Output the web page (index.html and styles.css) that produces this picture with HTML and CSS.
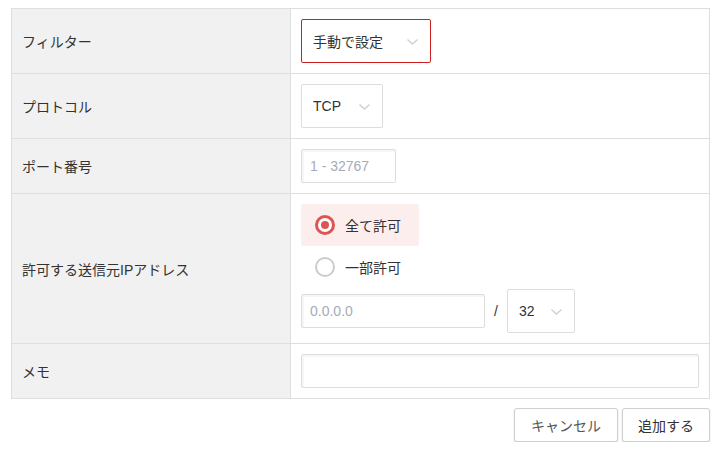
FILE: index.html
```html
<!DOCTYPE html>
<html lang="ja">
<head>
<meta charset="utf-8">
<link rel="stylesheet" href="styles.css">
</head>
<body>
<div class="wrap">
  <table class="form">
    <tr>
      <th>フィルター</th>
      <td>
        <div class="select select-filter active">
          <span>手動で設定</span>
          <svg class="chev" width="11" height="6" viewBox="0 0 11 6"><polyline points="0.5,0.5 5.5,5 10.5,0.5" fill="none" stroke="#d0d0d0" stroke-width="1.4"/></svg>
        </div>
      </td>
    </tr>
    <tr>
      <th>プロトコル</th>
      <td>
        <div class="select select-proto">
          <span>TCP</span>
          <svg class="chev" width="11" height="6" viewBox="0 0 11 6"><polyline points="0.5,0.5 5.5,5 10.5,0.5" fill="none" stroke="#d0d0d0" stroke-width="1.4"/></svg>
        </div>
      </td>
    </tr>
    <tr>
      <th>ポート番号</th>
      <td>
        <div class="input input-port placeholder">1 - 32767</div>
      </td>
    </tr>
    <tr>
      <th>許可する送信元IPアドレス</th>
      <td>
        <div class="radio checked"><span class="dot"></span><span>全て許可</span></div>
        <div class="radio"><span class="dot"></span><span>一部許可</span></div>
        <div class="ip-row">
          <div class="input input-ip placeholder">0.0.0.0</div>
          <span class="slash">/</span>
          <div class="select select-mask">
            <span>32</span>
            <svg class="chev" width="11" height="6" viewBox="0 0 11 6"><polyline points="0.5,0.5 5.5,5 10.5,0.5" fill="none" stroke="#d0d0d0" stroke-width="1.4"/></svg>
          </div>
        </div>
      </td>
    </tr>
    <tr>
      <th>メモ</th>
      <td>
        <div class="input input-memo"></div>
      </td>
    </tr>
  </table>
  <div class="actions">
    <button class="btn btn-cancel">キャンセル</button>
    <button class="btn btn-add">追加する</button>
  </div>
</div>
</body>
</html>
```

FILE: styles.css
```css
html, body {
  margin: 0;
  padding: 0;
  background: #fff;
}
body {
  font-family: "Liberation Sans", Arial, "Noto Sans CJK JP", sans-serif;
  font-size: 14px;
  color: #333;
}
.wrap {
  padding: 8px 12px 0 11px;
  width: 699px;
}
.form {
  width: 699px;
  border-collapse: collapse;
  table-layout: fixed;
}
.form th, .form td {
  border: 1px solid #dedede;
  padding: 10px;
  vertical-align: middle;
  text-align: left;
}
.form th {
  width: 258px;
  background: #f1f1f1;
  font-weight: normal;
  color: #333;
}
.select {
  box-sizing: border-box;
  height: 44px;
  border: 1px solid #dddddd;
  border-radius: 2px;
  display: flex;
  align-items: center;
  justify-content: space-between;
  background: #fff;
}
.select.active {
  border-color: #cc1f1f;
}
.select-filter {
  width: 130px;
  padding: 0 12px 0 11px;
}
.select-proto {
  width: 82px;
  padding: 0 12px 0 11px;
}
.select-mask {
  width: 68px;
  padding: 0 12px 0 11px;
}
.chev {
  display: block;
  margin-top: 1px;
}
.input {
  box-sizing: border-box;
  height: 34px;
  border: 1px solid #dddddd;
  border-radius: 2px;
  box-shadow: inset 2px 2px 0 #f6f6f6;
  display: flex;
  align-items: center;
  padding: 0 8px;
  background: #fff;
}
.placeholder {
  color: #a4acb9;
}
.input-port {
  width: 95px;
}
.input-ip {
  width: 184px;
}
.input-memo {
  width: 398px;
}
.radio {
  box-sizing: border-box;
  height: 42px;
  width: 118px;
  display: flex;
  align-items: center;
  gap: 10px;
  padding: 0 17px 0 14px;
  border-radius: 2px;
}
.radio.checked {
  background: #fdeeee;
}
.dot {
  box-sizing: border-box;
  width: 20px;
  height: 20px;
  border-radius: 50%;
  border: 2px solid #cccccc;
  display: flex;
  align-items: center;
  justify-content: center;
  background: #fff;
}
.radio.checked .dot {
  border: 3px solid #e05353;
}
.radio.checked .dot::after {
  content: "";
  width: 8px;
  height: 8px;
  border-radius: 50%;
  background: #e05353;
}
.ip-row {
  display: flex;
  align-items: center;
  margin-top: 1px;
}
.slash {
  width: 22px;
  text-align: center;
  color: #333;
}
.actions {
  display: flex;
  justify-content: flex-end;
  gap: 4px;
  margin-top: 9px;
  padding-right: 0;
}
.btn {
  box-sizing: border-box;
  height: 34px;
  border: 1px solid #cfcfcf;
  border-radius: 3px;
  background: #fff;
  box-shadow: 0 1px 2px rgba(0, 0, 0, 0.15);
  font-family: inherit;
  font-size: 14px;
  padding: 0;
  cursor: pointer;
}
.btn-cancel {
  width: 104px;
  color: #555;
}
.btn-add {
  width: 88px;
  color: #333;
}
```
